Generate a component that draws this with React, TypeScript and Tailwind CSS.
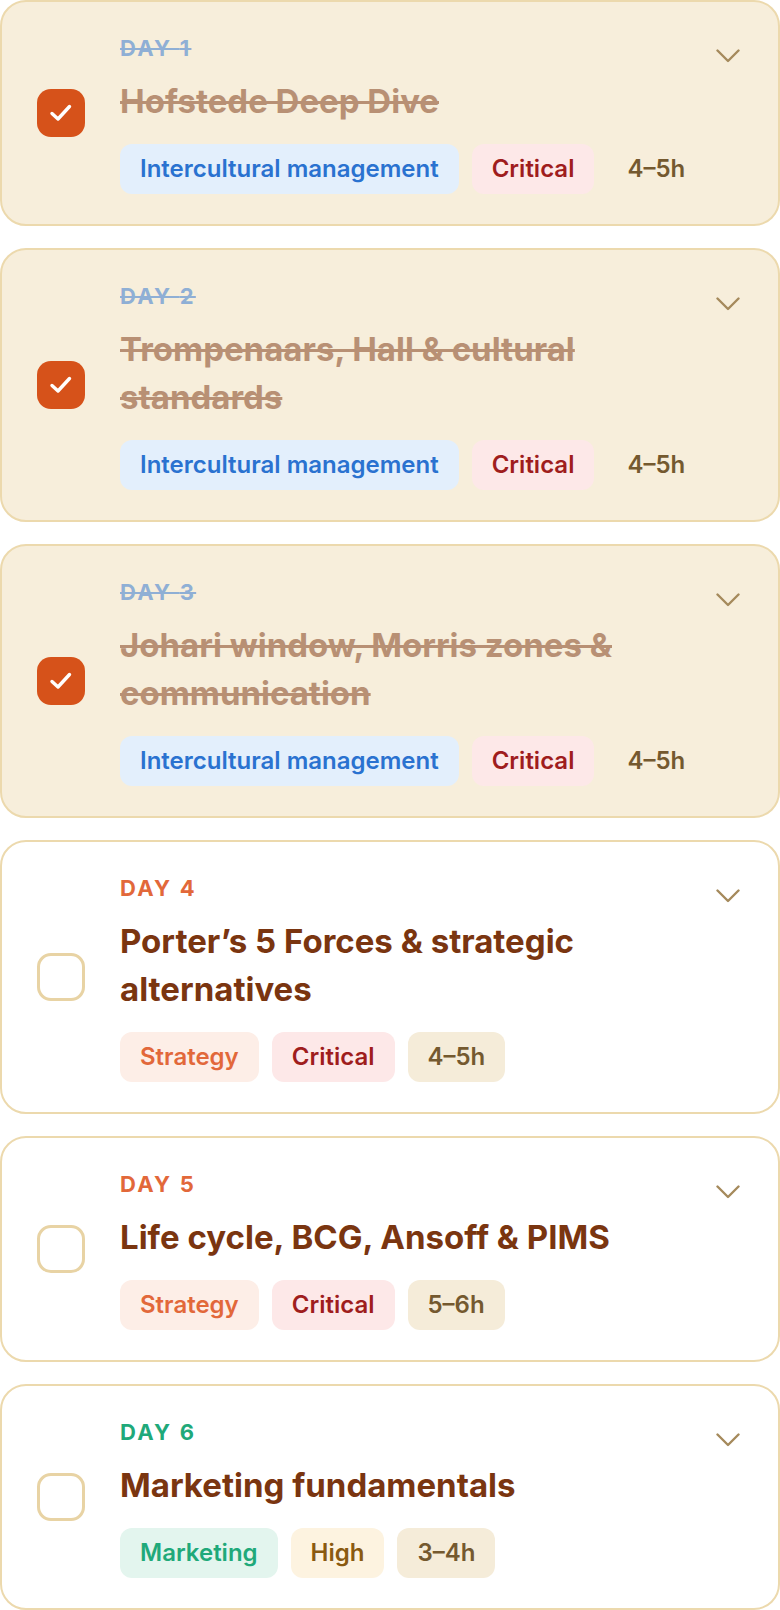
import React from "react";

type Cat = "inter" | "strategy" | "marketing";
type Prio = "critical" | "high";

interface Item {
  day: number;
  title: string;
  cat: Cat;
  prio: Prio;
  time: string;
  done: boolean;
}

const items: Item[] = [
  { day: 1, title: "Hofstede Deep Dive", cat: "inter", prio: "critical", time: "4–5h", done: true },
  { day: 2, title: "Trompenaars, Hall & cultural standards", cat: "inter", prio: "critical", time: "4–5h", done: true },
  { day: 3, title: "Johari window, Morris zones & communication", cat: "inter", prio: "critical", time: "4–5h", done: true },
  { day: 4, title: "Porter’s 5 Forces & strategic alternatives", cat: "strategy", prio: "critical", time: "4–5h", done: false },
  { day: 5, title: "Life cycle, BCG, Ansoff & PIMS", cat: "strategy", prio: "critical", time: "5–6h", done: false },
  { day: 6, title: "Marketing fundamentals", cat: "marketing", prio: "high", time: "3–4h", done: false },
];

const catLabel: Record<Cat, string> = {
  inter: "Intercultural management",
  strategy: "Strategy",
  marketing: "Marketing",
};

const catBadge: Record<Cat, string> = {
  inter: "bg-[#e3effc] text-[#2a72d0]",
  strategy: "bg-[#fdeee7] text-[#e2683a]",
  marketing: "bg-[#e3f5ee] text-[#1fa97a]",
};

const catDay: Record<Cat, string> = {
  inter: "text-[#2a72d0]",
  strategy: "text-[#e2683a]",
  marketing: "text-[#1fa97a]",
};

const prioBadge: Record<Prio, string> = {
  critical: "bg-[#fde8e8] text-[#9f1d1d]",
  high: "bg-[#fdf3e0] text-[#8a5a10]",
};

const prioLabel: Record<Prio, string> = {
  critical: "Critical",
  high: "High",
};

function Checkbox({ checked }: { checked: boolean }) {
  if (checked) {
    return (
      <div className="w-12 h-12 shrink-0 self-center rounded-[14px] bg-[#d6521a] flex items-center justify-center">
        <svg width="24" height="24" viewBox="0 0 24 24" fill="none">
          <polyline
            points="3,12.5 9,18 20.5,5.5"
            stroke="#ffffff"
            strokeWidth="3.4"
            strokeLinecap="round"
            strokeLinejoin="round"
          />
        </svg>
      </div>
    );
  }
  return (
    <div className="w-12 h-12 shrink-0 self-center rounded-[14px] border-[3px] border-[#e8d3a4] bg-white" />
  );
}

function Chevron() {
  return (
    <svg width="24" height="14" viewBox="0 0 24 14" fill="none" className="shrink-0 mt-[17px] ml-[6px]">
      <polyline
        points="1.5,1.5 12,12 22.5,1.5"
        stroke="#a58a5c"
        strokeWidth="2.4"
        strokeLinecap="round"
        strokeLinejoin="round"
      />
    </svg>
  );
}

function Card({ item }: { item: Item }) {
  const base = item.done
    ? "bg-[#f7eedb] border-[#ecd9ad]"
    : "bg-white border-[#ecd9ad]";
  const timeBg = item.done ? "bg-transparent" : "bg-[#f5ecd9]";
  return (
    <div className={`flex items-start rounded-[26px] border-2 pl-[35px] pr-[38px] pt-[30px] pb-[30px] ${base}`}>
      <Checkbox checked={item.done} />
      <div className="flex-1 min-w-0 ml-[35px]">
        <div
          className={`text-[22px] leading-[33px] font-bold tracking-[0.1em] ${catDay[item.cat]} ${
            item.done ? "opacity-50 line-through" : ""
          }`}
        >
          DAY {item.day}
        </div>
        <div
          className={`mt-[12px] text-[33px] leading-[48px] font-bold text-[#7a3510] ${
            item.done ? "opacity-50 line-through" : ""
          }`}
        >
          {item.title}
        </div>
        <div className="mt-[19px] flex flex-nowrap gap-[13px] whitespace-nowrap">
          <span className={`h-[50px] px-5 rounded-[12px] flex items-center text-[24px] font-semibold ${catBadge[item.cat]}`}>
            {catLabel[item.cat]}
          </span>
          <span className={`h-[50px] px-5 rounded-[12px] flex items-center text-[24px] font-semibold ${prioBadge[item.prio]}`}>
            {prioLabel[item.prio]}
          </span>
          <span className={`h-[50px] px-5 rounded-[12px] flex items-center text-[24px] font-semibold text-[#74592f] ${timeBg}`}>
            {item.time}
          </span>
        </div>
      </div>
      <Chevron />
    </div>
  );
}

export default function App() {
  return (
    <div className="w-[780px] bg-white font-['Inter','Noto_Sans',sans-serif] flex flex-col gap-[22px]">
      {items.map((it) => (
        <Card key={it.day} item={it} />
      ))}
    </div>
  );
}
